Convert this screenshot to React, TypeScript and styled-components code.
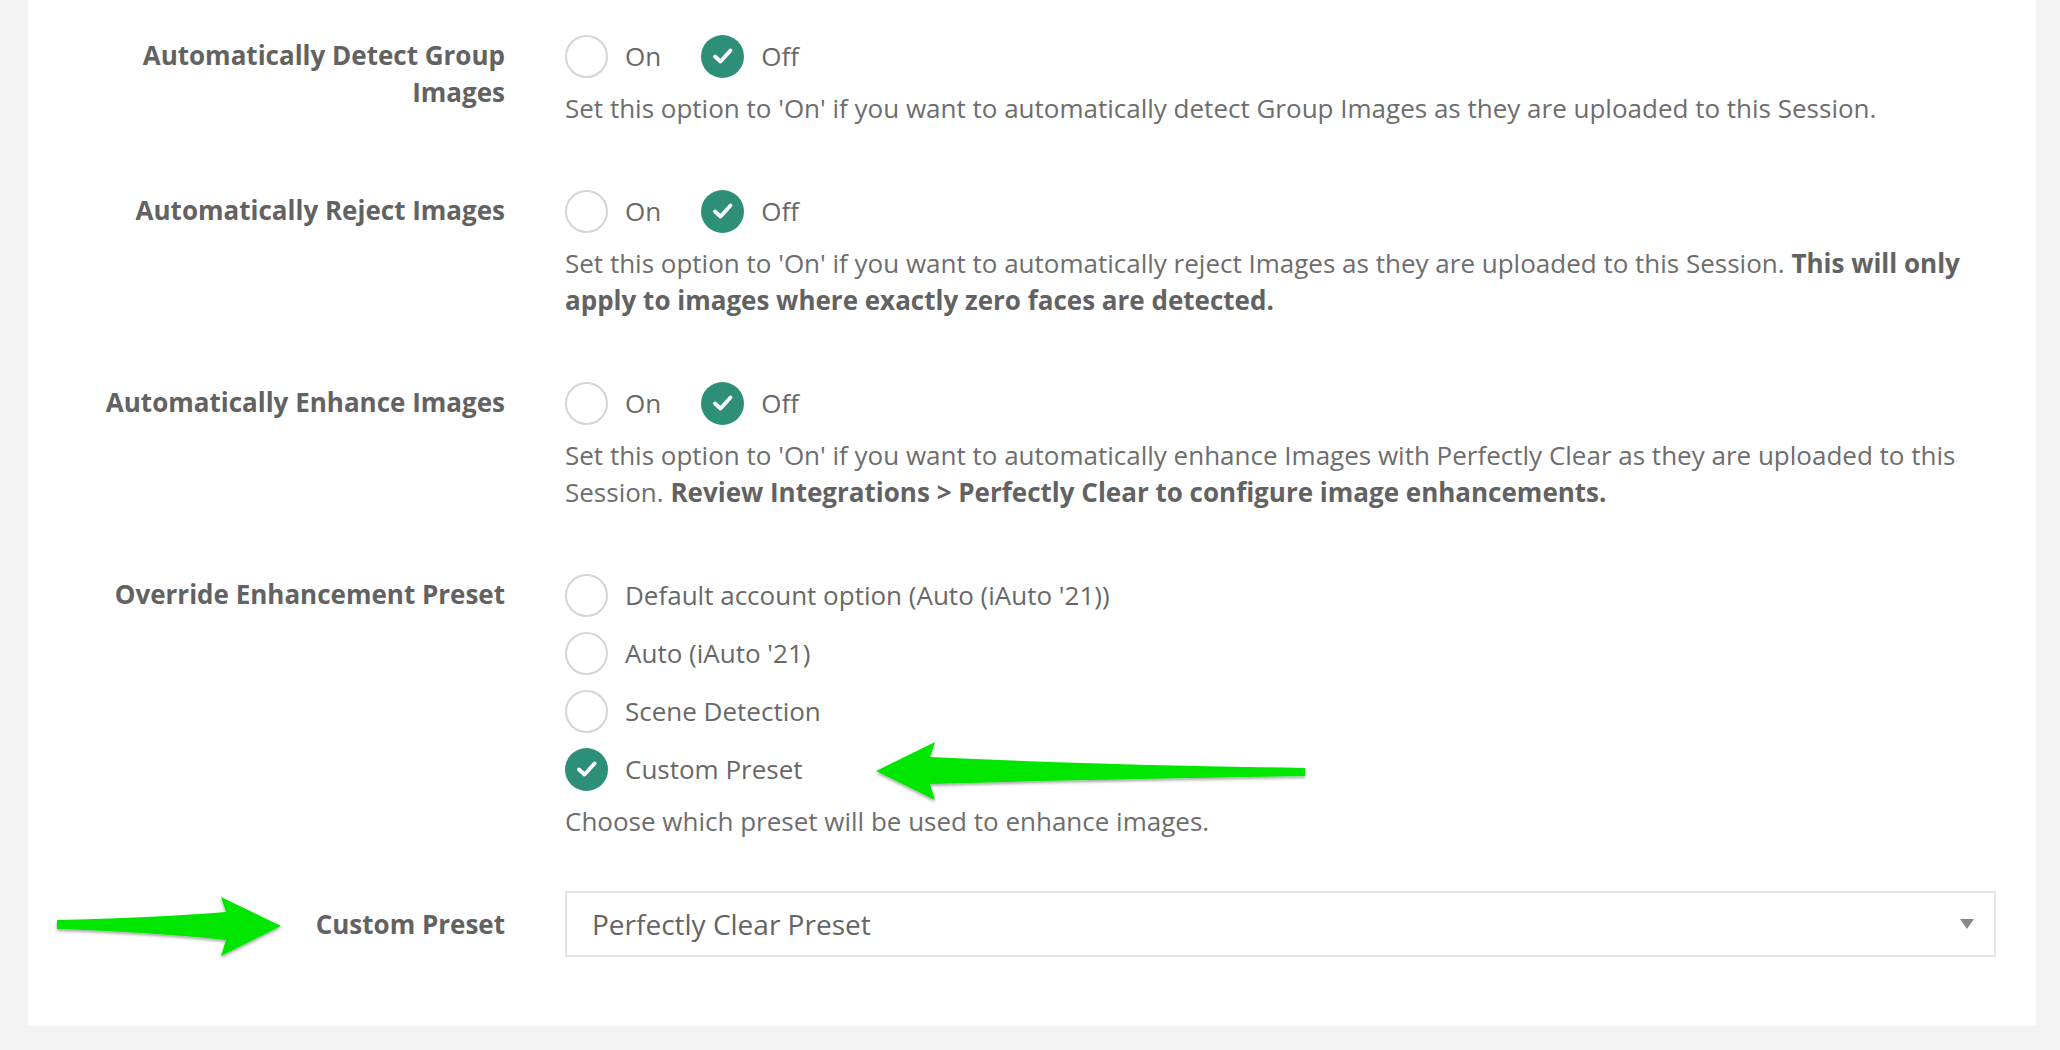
import React from 'react';
import styled, { createGlobalStyle } from 'styled-components';

const GlobalStyle = createGlobalStyle`
    html, body {
        margin: 0;
        padding: 0;
        background: #f3f3f3;
        font-family: "Open Sans", "Liberation Sans", sans-serif;
    }
`;

const Page = styled.div`
    position: relative;
    width: 2060px;
    height: 1050px;
    overflow: hidden;
`;

const Card = styled.div`
    margin-left: 28px;
    width: 2008px;
    background: #ffffff;
    padding: 34px 40px 69px 0;
    box-sizing: border-box;
    display: flex;
    flex-direction: column;
`;

const Row = styled.div<{ $gap?: number }>`
    display: grid;
    grid-template-columns: 477px 1fr;
    column-gap: 60px;
    margin-bottom: ${p => (p.$gap !== undefined ? p.$gap : 62)}px;
    &:last-child {
        margin-bottom: 0;
    }
`;

const Label = styled.div<{ $center?: boolean }>`
    text-align: right;
    font-weight: 700;
    font-size: 26px;
    line-height: 37px;
    color: #626262;
    padding-top: ${p => (p.$center ? 0 : 3)}px;
    align-self: ${p => (p.$center ? 'center' : 'start')};
`;

const Field = styled.div`
    display: flex;
    flex-direction: column;
`;

const RadioLine = styled.div`
    display: flex;
    align-items: center;
    gap: 40px;
    height: 44px;
`;

const RadioStack = styled.div`
    display: flex;
    flex-direction: column;
    gap: 14px;
`;

const Option = styled.label`
    display: flex;
    align-items: center;
    gap: 17px;
    height: 44px;
    font-size: 26px;
    color: #686868;
`;

const Circle = styled.span<{ $checked?: boolean }>`
    width: 43px;
    height: 43px;
    border-radius: 50%;
    box-sizing: border-box;
    border: ${p => (p.$checked ? 'none' : '2px solid #d8d5d0')};
    background: ${p => (p.$checked ? '#2e8f78' : '#ffffff')};
    display: flex;
    align-items: center;
    justify-content: center;
    flex-shrink: 0;
`;

const Help = styled.p`
    margin: 12px 0 0 0;
    font-size: 26px;
    line-height: 37px;
    color: #6d6d6d;
    b {
        font-weight: 700;
        color: #626262;
    }
`;

const Select = styled.div`
    height: 66px;
    border: 2px solid #e4e4e4;
    box-sizing: border-box;
    display: flex;
    align-items: center;
    justify-content: space-between;
    padding: 0 20px 0 25px;
    font-size: 28px;
    color: #646464;
`;

const Caret = styled.span`
    width: 0;
    height: 0;
    border-left: 7px solid transparent;
    border-right: 7px solid transparent;
    border-top: 10px solid #888888;
`;

const Overlay = styled.svg`
    position: absolute;
    top: 0;
    left: 0;
    pointer-events: none;
`;

function Radio({ label, checked }: { label: string; checked?: boolean }): JSX.Element {
    return (
        <Option>
            <Circle $checked={checked}>
                {checked && (
                    <svg width="22" height="18" viewBox="0 0 22 18">
                        <path d="M3 9.5 L8.5 14.5 L18.5 3.5" fill="none" stroke="#fff" strokeWidth="3.8" strokeLinecap="round" strokeLinejoin="round" />
                    </svg>
                )}
            </Circle>
            {label}
        </Option>
    );
}

function OnOff(): JSX.Element {
    return (
        <RadioLine>
            <Radio label="On" />
            <Radio label="Off" checked />
        </RadioLine>
    );
}

export default function App(): JSX.Element {
    return (
        <Page>
            <GlobalStyle />
            <Card>
                <Row>
                    <Label>Automatically Detect Group<br />Images</Label>
                    <Field>
                        <OnOff />
                        <Help>Set this option to 'On' if you want to automatically detect Group Images as they are uploaded to this Session.</Help>
                    </Field>
                </Row>
                <Row>
                    <Label>Automatically Reject Images</Label>
                    <Field>
                        <OnOff />
                        <Help>
                            Set this option to 'On' if you want to automatically reject Images as they are uploaded to this Session.{' '}
                            <b>This will only apply to images where exactly zero faces are detected.</b>
                        </Help>
                    </Field>
                </Row>
                <Row>
                    <Label>Automatically Enhance Images</Label>
                    <Field>
                        <OnOff />
                        <Help>
                            Set this option to 'On' if you want to automatically enhance Images with Perfectly Clear as they are uploaded to this Session.{' '}
                            <b>Review Integrations &gt; Perfectly Clear to configure image enhancements.</b>
                        </Help>
                    </Field>
                </Row>
                <Row $gap={51}>
                    <Label>Override Enhancement Preset</Label>
                    <Field>
                        <RadioStack>
                            <Radio label="Default account option (Auto (iAuto '21))" />
                            <Radio label="Auto (iAuto '21)" />
                            <Radio label="Scene Detection" />
                            <Radio label="Custom Preset" checked />
                        </RadioStack>
                        <Help>Choose which preset will be used to enhance images.</Help>
                    </Field>
                </Row>
                <Row>
                    <Label $center>Custom Preset</Label>
                    <Select>
                        Perfectly Clear Preset
                        <Caret />
                    </Select>
                </Row>
            </Card>
            <Overlay width="2060" height="1050" viewBox="0 0 2060 1050">
                <defs>
                    <filter id="shadow" x="-10%" y="-50%" width="120%" height="200%">
                        <feDropShadow dx="0" dy="2" stdDeviation="1.5" floodColor="#000" floodOpacity="0.35" />
                    </filter>
                </defs>
                <path
                    d="M876 771 L935 742 L930 757 Q1100 765 1305 768 L1305 776 Q1100 779 930 784 L935 800 Z"
                    fill="#00e600"
                    filter="url(#shadow)"
                />
                <path
                    d="M281 926 L221 897 L226 912 Q150 918 57 920 L57 929 Q150 932 226 940 L221 956 Z"
                    fill="#00e600"
                    filter="url(#shadow)"
                />
            </Overlay>
        </Page>
    );
}
